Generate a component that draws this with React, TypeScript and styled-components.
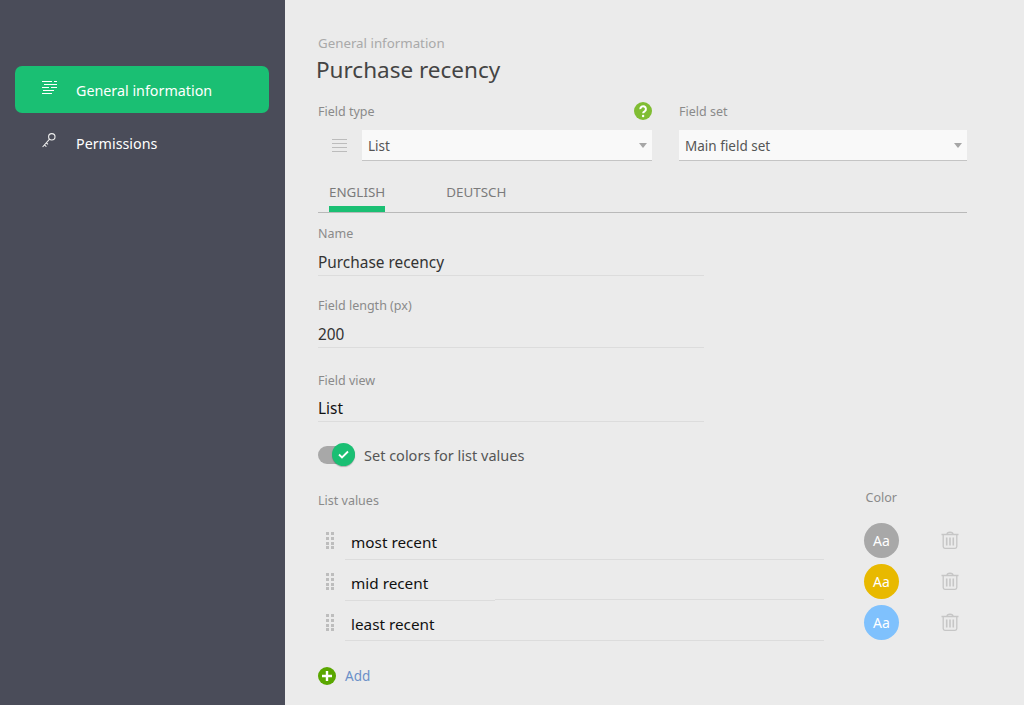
import React from "react";
import styled, { createGlobalStyle } from "styled-components";

const GlobalStyle = createGlobalStyle`
  html, body {
    margin: 0;
    height: 100%;
    overflow: hidden;
    background: #ebebeb;
    font-family: "Noto Sans", "Open Sans", sans-serif;
  }
`;

const Page = styled.div`
  display: flex;
  width: 1024px;
  height: 705px;
  overflow: hidden;
`;

const Sidebar = styled.nav`
  display: flex;
  flex-direction: column;
  width: 285px;
  flex: none;
  padding: 66px 16px 0 15px;
  box-sizing: border-box;
  background: #4a4c59;
  gap: 6px;
`;

const NavItem = styled.div<{ active?: boolean }>`
  display: flex;
  align-items: center;
  height: 47px;
  padding: 1px 0 0 27px;
  box-sizing: border-box;
  gap: 19px;
  border-radius: 7px;
  background: ${({ active }) => (active ? "#1abf73" : "transparent")};
  color: #fff;
  font-size: 14.3px;
`;

const NavIcon = styled.svg`
  width: 15px;
  height: 15px;
  flex: none;
  margin-top: -5px;
`;

const Main = styled.main`
  flex: 1;
  padding: 35px 57px 0 33px;
  min-width: 0;
`;

const Crumb = styled.div`
  font-size: 13.3px;
  line-height: 17px;
  color: #a9a9a9;
`;

const Title = styled.h1`
  margin: 3px 0 0 -2px;
  font-size: 22.5px;
  line-height: 30px;
  font-weight: 400;
  color: #444;
`;

const TopRow = styled.div`
  display: flex;
  margin-top: 16px;
  gap: 27px;
`;

const TypeColumn = styled.div`
  width: 334px;
  flex: none;
`;

const SetColumn = styled.div`
  flex: 1;
`;

const LabelRow = styled.div`
  display: flex;
  align-items: center;
  justify-content: space-between;
  height: 20px;
  margin-bottom: 9px;
`;

const Label = styled.div`
  font-size: 12.5px;
  line-height: 17px;
  color: #8a8a8a;
`;

const SelectRow = styled.div`
  display: flex;
  align-items: center;
  gap: 15px;
  padding-left: 14px;
`;

const Select = styled.div`
  flex: 1;
  display: flex;
  align-items: center;
  justify-content: space-between;
  height: 31px;
  padding: 2px 5px 0 6px;
  box-sizing: border-box;
  background: #f9f9f9;
  border-bottom: 1px solid #c4c4c4;
  font-size: 13.5px;
  color: #555;
`;

const Caret = styled.span`
  width: 0;
  height: 0;
  margin-top: -2px;
  border-left: 4.5px solid transparent;
  border-right: 4.5px solid transparent;
  border-top: 5px solid #a6a6a6;
`;

const Tabs = styled.div`
  display: flex;
  margin-top: 21px;
  padding-left: 11px;
  gap: 61px;
  height: 30px;
  border-bottom: 1px solid #b9b9b9;
`;

const Tab = styled.div<{ active?: boolean }>`
  height: 30px;
  box-sizing: border-box;
  font-size: 13.4px;
  line-height: 20px;
  color: #7b7b7b;
  border-bottom: ${({ active }) => (active ? "6px solid #1abf73" : "none")};
`;

const Field = styled.div<{ gap: number }>`
  width: 386px;
  margin-top: ${({ gap }) => gap}px;
`;

const FieldValue = styled.div<{ dark?: boolean }>`
  height: 26px;
  margin-top: ${({ dark }) => (dark ? 7 : 8)}px;
  box-sizing: border-box;
  border-bottom: 1px solid #dcdcdc;
  font-size: 15.4px;
  line-height: 26px;
  color: ${({ dark }) => (dark ? "#111" : "#333")};
`;

const ToggleRow = styled.div`
  display: flex;
  align-items: center;
  gap: 9px;
  margin-top: 21px;
  height: 24px;
  font-size: 14.5px;
  color: #555;
`;

const Toggle = styled.div`
  position: relative;
  width: 37px;
  height: 18px;
  border-radius: 9px;
  background: #a8a8a8;
`;

const ToggleKnob = styled.div`
  position: absolute;
  top: -3px;
  right: 0;
  display: flex;
  align-items: center;
  justify-content: center;
  width: 23px;
  height: 23px;
  border-radius: 50%;
  background: #1abf73;
  box-shadow: 0 1px 1px rgba(0, 0, 0, 0.25);
`;

const ListHeader = styled.div`
  display: flex;
  align-items: flex-end;
  justify-content: space-between;
  margin-top: 22px;
  padding-right: 70px;
  height: 20px;
`;

const ColorLabel = styled(Label)`
  transform: translateY(-3px);
`;

const Rows = styled.div`
  display: flex;
  flex-direction: column;
  margin-top: 14px;
  gap: 6px;
`;

const Row = styled.div`
  display: flex;
  align-items: flex-start;
  height: 35px;
`;

const Grip = styled.svg`
  width: 8px;
  height: 17px;
  flex: none;
  margin: 9px 0 0 8px;
`;

const RowInput = styled.div<{ height: number; notched?: boolean }>`
  position: relative;
  width: 479px;
  height: ${({ height }) => height}px;
  margin-left: 11px;
  padding: 8px 0 0 6px;
  box-sizing: border-box;
  border-bottom: 1px solid #dcdcdc;
  font-size: 15.3px;
  line-height: 22px;
  color: #111;

  ${({ notched }) =>
    notched
      ? `
    &::after {
      content: "";
      position: absolute;
      left: 0;
      bottom: -2px;
      width: 150px;
      height: 1px;
      background: #dcdcdc;
      border-top: 1px solid #ebebeb;
    }
  `
      : ""}
`;

const Swatch = styled.div<{ color: string }>`
  display: flex;
  align-items: center;
  justify-content: center;
  flex: none;
  width: 35px;
  height: 35px;
  margin-left: 40px;
  border-radius: 50%;
  background: ${({ color }) => color};
  color: #fff;
  font-size: 14px;
`;

const Trash = styled.svg`
  width: 18px;
  height: 18px;
  flex: none;
  margin: 8px 0 0 42px;
`;

const AddRow = styled.div`
  display: flex;
  align-items: center;
  gap: 9px;
  margin-top: 26px;
  height: 20px;
  font-size: 13.5px;
  color: #6a8fc8;
`;

const HelpIcon = () => (
  <svg width="18" height="18" viewBox="0 0 18 18">
    <circle cx="9" cy="9" r="9" fill="#80bd33" />
    <path d="M6.3 7.1a2.8 2.8 0 1 1 4.4 2.2c-1 .6-1.6 1-1.6 2" fill="none" stroke="#fff" strokeWidth="2" />
    <circle cx="9.1" cy="14" r="1.2" fill="#fff" />
  </svg>
);

const GripIcon = () => (
  <Grip viewBox="0 0 8 17" fill="#bdbdbd">
    {[0, 5, 10, 14].map((y) => (
      <React.Fragment key={y}>
        <rect x="0" y={y} width="3" height="3" />
        <rect x="5" y={y} width="3" height="3" />
      </React.Fragment>
    ))}
  </Grip>
);

const TrashIcon = () => (
  <Trash viewBox="0 0 18 18" fill="none" stroke="#c6c6c6" strokeWidth="1.3">
    <path d="M0.5 3.5h17M6 3.2c0-2.6 6-2.6 6 0" />
    <path d="M2.2 4v11.6c0 1 .7 1.7 1.7 1.7h10.2c1 0 1.7-.7 1.7-1.7V4" />
    <path d="M5.7 6.5v8M9 6.5v8M12.3 6.5v8" strokeWidth="1.6" />
  </Trash>
);

const listValues = [
  { text: "most recent", color: "#a8a8a8", height: 37 },
  { text: "mid recent", color: "#e8b900", height: 36, notched: true },
  { text: "least recent", color: "#7fc1fd", height: 36 },
];

const App: React.FC = () => (
  <>
    <GlobalStyle />
    <Page>
      <Sidebar>
        <NavItem active>
          <NavIcon viewBox="0 0 15 15" stroke="#fff" strokeWidth="1" fill="none">
            <path d="M0 1.5h10M12 1.5h3M2 4.5h13M0 7.5h7M9 7.5h6M1 10.5h11M0 13.5h10" />
          </NavIcon>
          General information
        </NavItem>
        <NavItem>
          <NavIcon viewBox="0 0 15 15" stroke="#eee" strokeWidth="1.1" fill="none">
            <circle cx="9.8" cy="3.8" r="3.2" />
            <path d="M7.6 6.2L0.6 14M2.4 11.8l2 1.8M4.4 9.8l1.6 1.6" />
          </NavIcon>
          Permissions
        </NavItem>
      </Sidebar>
      <Main>
        <Crumb>General information</Crumb>
        <Title>Purchase recency</Title>
        <TopRow>
          <TypeColumn>
            <LabelRow>
              <Label>Field type</Label>
              <HelpIcon />
            </LabelRow>
            <SelectRow>
              <svg width="15" height="15" viewBox="0 0 15 15" stroke="#bcbcbc" strokeWidth="1">
                <path d="M0 1.5h15M0 5.5h15M0 9.5h15M0 13.5h15" />
              </svg>
              <Select>
                List
                <Caret />
              </Select>
            </SelectRow>
          </TypeColumn>
          <SetColumn>
            <LabelRow>
              <Label>Field set</Label>
            </LabelRow>
            <Select>
              Main field set
              <Caret />
            </Select>
          </SetColumn>
        </TopRow>
        <Tabs>
          <Tab active>ENGLISH</Tab>
          <Tab>DEUTSCH</Tab>
        </Tabs>
        <Field gap={12}>
          <Label>Name</Label>
          <FieldValue>Purchase recency</FieldValue>
        </Field>
        <Field gap={21}>
          <Label>Field length (px)</Label>
          <FieldValue>200</FieldValue>
        </Field>
        <Field gap={24}>
          <Label>Field view</Label>
          <FieldValue dark>List</FieldValue>
        </Field>
        <ToggleRow>
          <Toggle>
            <ToggleKnob>
              <svg width="11" height="9" viewBox="0 0 11 9" fill="none" stroke="#fff" strokeWidth="1.8">
                <path d="M1 4.5l3 3 6-6" />
              </svg>
            </ToggleKnob>
          </Toggle>
          Set colors for list values
        </ToggleRow>
        <ListHeader>
          <Label>List values</Label>
          <ColorLabel>Color</ColorLabel>
        </ListHeader>
        <Rows>
          {listValues.map((v) => (
            <Row key={v.text}>
              <GripIcon />
              <RowInput height={v.height} notched={v.notched}>
                {v.text}
              </RowInput>
              <Swatch color={v.color}>Aa</Swatch>
              <TrashIcon />
            </Row>
          ))}
        </Rows>
        <AddRow>
          <svg width="18" height="18" viewBox="0 0 18 18">
            <circle cx="9" cy="9" r="9" fill="#5aa700" />
            <path d="M9 4v10M4 9h10" stroke="#fff" strokeWidth="2.4" />
          </svg>
          Add
        </AddRow>
      </Main>
    </Page>
  </>
);

export default App;
